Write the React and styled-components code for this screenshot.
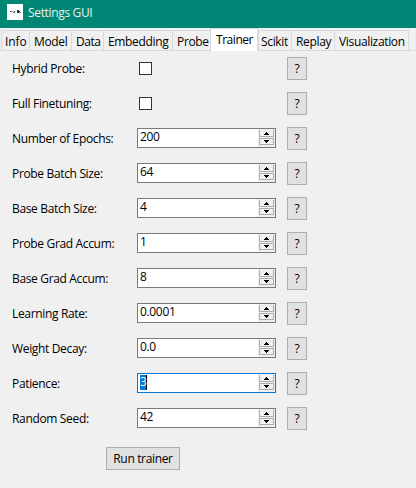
import React from "react";
import styled, { createGlobalStyle, css } from "styled-components";

const Global = createGlobalStyle`
  * { box-sizing: border-box; }
  body { margin: 0; background: #f0f0f0; }
`;

const Window = styled.main`
  width: 416px;
  height: 488px;
  overflow: hidden;
  background: #f0f0f0;
  color: #000;
  font: 12px/16px "Open Sans", "Noto Sans", sans-serif;
  letter-spacing: -0.34px;
  white-space: nowrap;
`;

const TitleBar = styled.header`
  display: flex;
  align-items: flex-start;
  height: 28px;
  padding: 4px 0 0 7px;
  gap: 5px;
  background: #018574;
  color: #e6f3f1;
`;

const AppIcon = styled.svg`
  width: 16px;
  height: 16px;
  background: #fff;
`;

const Title = styled.span`
  padding-top: 1px;
`;

const TabBar = styled.nav`
  display: flex;
  align-items: flex-end;
  height: 23px;
  padding-left: 1px;
  box-shadow: inset 0 -1px #dcdcdc;
`;

const Tab = styled.div`
  width: ${(p) => p.$w}px;
  height: 21px;
  padding: 3px 0 0 ${(p) => p.$pad || 4}px;
  border: solid #d9d9d9;
  border-width: 1px 0 1px 1px;
  letter-spacing: ${(p) => p.$ls || -0.34}px;
  &:last-child { border-right-width: 1px; }
  ${(p) => p.$active && css`
    height: 23px;
    border-width: 1px 1px 0 1px;
    background: #fff;
  `}
`;

const Form = styled.section`
  display: flex;
  flex-direction: column;
  padding: 6px 0 0 12px;
`;

const Row = styled.div`
  display: grid;
  grid-template-columns: 125px 150px 20px;
  height: 35px;
  align-items: start;
`;

const Label = styled.label`
  padding-top: 4px;
`;

const CheckBox = styled.span`
  width: 13px;
  height: 13px;
  margin: 5px 0 0 2px;
  border: 1px solid #333;
  background: #fff;
`;

const SpinBox = styled.div`
  display: flex;
  justify-content: space-between;
  width: 139px;
  height: 20px;
  margin-top: 1px;
  border: 1px solid ${(p) => (p.$focus ? "#0078d7" : "#7a7a7a")};
  background: #fff;
`;

const Value = styled.span`
  height: 15px;
  margin: 1px 0 0 2px;
  line-height: 14px;
  ${(p) => p.$selected && css`
    width: 7px;
    border-right: 1px solid #000;
    background: #0078d7;
    color: #fff;
  `}
`;

const Arrows = styled.div`
  display: flex;
  flex-direction: column;
  gap: 1px;
  width: 17px;
  padding: 1px 1px 0;
  background: #f0f0f0;
`;

const ArrowButton = styled.svg`
  display: block;
  width: 15px;
  height: 7px;
`;

const Button = styled.div`
  width: ${(p) => p.$w}px;
  height: 23px;
  border: 1px solid #adadad;
  background: #e1e1e1;
  line-height: 22px;
  text-align: center;
`;

const Actions = styled.footer`
  padding: 5px 0 0 94px;
`;

const tabs = [
  { name: "Info", w: 28, pad: 3, ls: -0.1 },
  { name: "Model", w: 42 },
  { name: "Data", w: 32, ls: -0.5 },
  { name: "Embedding", w: 69 },
  { name: "Probe", w: 38 },
  { name: "Trainer", w: 48, pad: 5, active: true, ls: -0.45 },
  { name: "Scikit", w: 33, pad: 2 },
  { name: "Replay", w: 43 },
  { name: "Visualization", w: 75 },
];

const fields = [
  { label: "Hybrid Probe:" },
  { label: "Full Finetuning:" },
  { label: "Number of Epochs:", value: "200" },
  { label: "Probe Batch Size:", value: "64" },
  { label: "Base Batch Size:", value: "4" },
  { label: "Probe Grad Accum:", value: "1" },
  { label: "Base Grad Accum:", value: "8" },
  { label: "Learning Rate:", value: "0.0001" },
  { label: "Weight Decay:", value: "0.0" },
  { label: "Patience:", value: "3", focus: true },
  { label: "Random Seed:", value: "42" },
];

function Arrow({ down }) {
  return (
    <ArrowButton viewBox="0 0 15 7" shapeRendering="crispEdges">
      <path d="M0 0h15v7H0z" fill="#f0f0f0" />
      <path d={down ? "M0 0h15v7H0zM1 1v5h13V1z" : "M0 0h1v6h13V0h1v7H0z"} fill="#adadad" fillRule="evenodd" />
      <path d={down ? "M5 2h5v1H5zM6 3h3v1H6zM7 4h1v1H7z" : "M7 2h1v1H7zM6 3h3v1H6zM5 4h5v1H5z"} fill="#000" />
    </ArrowButton>
  );
}

export default function App() {
  return (
    <Window>
      <Global />
      <TitleBar>
        <AppIcon viewBox="0 0 16 16">
          <path d="M3 7h2v1H3zM6 8h2v1H6z" fill="#58707c" />
          <path d="M7 7h1v1H7zM10 6h2v3h-2zM12 7h1v2h-1z" fill="#12394d" />
          <path d="M5 7h1v1H5zM12 8h2v1h-2z" fill="#7894a0" />
        </AppIcon>
        <Title>Settings GUI</Title>
      </TitleBar>
      <TabBar>
        {tabs.map((t) => (
          <Tab key={t.name} $w={t.w} $pad={t.pad} $ls={t.ls} $active={t.active}>{t.name}</Tab>
        ))}
      </TabBar>
      <Form>
        {fields.map((f) => (
          <Row key={f.label}>
            <Label>{f.label}</Label>
            {f.value === undefined ? <CheckBox /> : (
              <SpinBox $focus={f.focus}>
                <Value $selected={f.focus}>{f.value}</Value>
                <Arrows><Arrow /><Arrow down /></Arrows>
              </SpinBox>
            )}
            <Button $w={20}>?</Button>
          </Row>
        ))}
        <Actions><Button $w={74}>Run trainer</Button></Actions>
      </Form>
    </Window>
  );
}
